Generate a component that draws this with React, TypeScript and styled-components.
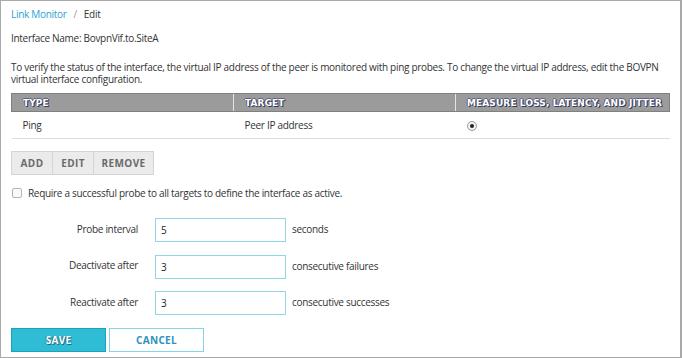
import React from "react";
import styled, { createGlobalStyle } from "styled-components";

const Global = createGlobalStyle`
  html, body { margin: 0; padding: 0; background: #fff; }
  body { font-family: "Open Sans", "Noto Sans", sans-serif; color: #333; }
  * { box-sizing: border-box; }
`;

const Frame = styled.div`
  width: 682px;
  height: 358px;
  border: 1px solid #a9a9a9;
  border-right-width: 2px;
  padding: 6px 11px 0 10px;
  font-size: 10px;
  letter-spacing: -0.3px;
  overflow: hidden;
`;

const Breadcrumb = styled.div`
  display: flex;
  gap: 7px;
  line-height: 14px;
  height: 14px;
`;

const Crumb = styled.span<{ $link?: boolean; $sep?: boolean }>`
  color: ${(p) => (p.$link ? "#2b9fd1" : p.$sep ? "#999" : "#333")};
`;

const Line = styled.div<{ $mt: number }>`
  margin-top: ${(p) => p.$mt}px;
  line-height: 14px;
`;

const Para = styled.p`
  margin: 16px 0 0;
  line-height: 12px;
  width: 665px;
`;

const Table = styled.table`
  margin-top: 8px;
  width: 659px;
  border-collapse: collapse;
  table-layout: fixed;
`;

const Th = styled.th<{ $w?: number }>`
  ${(p) => (p.$w ? `width: ${p.$w}px;` : "")}
  height: 18px;
  padding: 0 0 0 11px;
  background: #9b9b9b;
  border-top: 1px solid #808080;
  border-bottom: 1px solid #808080;
  border-left: 1px solid #e4e4e4;
  text-align: left;
  font-family: "DejaVu Sans", Verdana, sans-serif;
  font-weight: bold;
  font-size: 9px;
  letter-spacing: 0.1px;
  color: #fff;
  text-shadow: 1px 1px 0 #363b5a, -1px 0 0 #5d6283, 0 -1px 0 #5d6283, 1px 0 0 #4a4f70;
  &:first-child { border-left: 1px solid #808080; }
  &:last-child { border-right: 1px solid #808080; }
`;

const Td = styled.td`
  height: 27px;
  padding: 0 0 0 11px;
  border-bottom: 1px solid #dcdcdc;
  vertical-align: middle;
`;

const Radio = styled.span`
  display: inline-block;
  width: 10px;
  height: 10px;
  border: 1px solid #9a9a9a;
  border-radius: 50%;
  background: #f4f4f4;
  position: relative;
  vertical-align: middle;
  &::after {
    content: "";
    position: absolute;
    left: 2px;
    top: 2px;
    width: 4px;
    height: 4px;
    border-radius: 50%;
    background: #222;
  }
`;

const BtnGroup = styled.div`
  margin-top: 12px;
  display: flex;
`;

const GroupBtn = styled.button<{ $w: number }>`
  width: ${(p) => p.$w}px;
  height: 24px;
  background: #ebebeb;
  border: 1px solid #d5d5d5;
  margin-left: -1px;
  &:first-child { margin-left: 0; }
  font-family: "Open Sans", sans-serif;
  font-weight: 700;
  font-size: 10px;
  letter-spacing: 0.4px;
  color: #6a6a6a;
  padding: 0;
`;

const CheckRow = styled.label`
  margin-top: 11px;
  display: flex;
  align-items: center;
  gap: 6px;
  height: 14px;
  padding-left: 1px;
`;

const Check = styled.span`
  width: 10px;
  height: 10px;
  border: 1px solid #b5b5b5;
  border-radius: 2px;
  background: #fafafa;
`;

const Form = styled.div`
  margin-top: 18px;
  display: grid;
  grid-template-columns: 127px 131px auto;
  column-gap: 17px;
  row-gap: 12.5px;
  align-items: center;
`;

const Label = styled.div`
  text-align: right;
  margin-top: -3px;
`;

const Input = styled.div`
  height: 24px;
  border: 1px solid #8fd6e6;
  padding: 0 0 0 5px;
  display: flex;
  align-items: center;
  font-size: 10px;
  color: #222;
`;

const Unit = styled.div`
  margin-left: -11px;
  margin-top: -2px;
`;

const Actions = styled.div`
  margin-top: 13px;
  display: flex;
  gap: 3px;
`;

const ActionBtn = styled.button<{ $primary?: boolean }>`
  width: 95px;
  height: 24px;
  padding: 0;
  font-family: "Open Sans", sans-serif;
  font-weight: 700;
  font-size: 10px;
  letter-spacing: 0.3px;
  background: ${(p) => (p.$primary ? "#2fbcd5" : "#fff")};
  border: 1px solid ${(p) => (p.$primary ? "#1ea2ba" : "#86d5e5")};
  color: ${(p) => (p.$primary ? "#fff" : "#2b94ba")};
  text-shadow: ${(p) => (p.$primary ? "1px 1px 0 #1a6f85, -1px 0 0 #2a8aa0" : "none")};
`;

export default function App() {
  return (
    <>
      <Global />
      <Frame>
        <Breadcrumb>
          <Crumb $link>Link Monitor</Crumb>
          <Crumb $sep>/</Crumb>
          <Crumb>Edit</Crumb>
        </Breadcrumb>
        <Line $mt={10}>Interface Name: BovpnVif.to.SiteA</Line>
        <Para>
          To verify the status of the interface, the virtual IP address of the peer is monitored with ping probes. To change the virtual IP address, edit the BOVPN
          virtual interface configuration.
        </Para>
        <Table>
          <thead>
            <tr>
              <Th $w={222}>TYPE</Th>
              <Th $w={222}>TARGET</Th>
              <Th>MEASURE LOSS, LATENCY, AND JITTER</Th>
            </tr>
          </thead>
          <tbody>
            <tr>
              <Td>Ping</Td>
              <Td>Peer IP address</Td>
              <Td>
                <Radio />
              </Td>
            </tr>
          </tbody>
        </Table>
        <BtnGroup>
          <GroupBtn $w={42}>ADD</GroupBtn>
          <GroupBtn $w={42}>EDIT</GroupBtn>
          <GroupBtn $w={61}>REMOVE</GroupBtn>
        </BtnGroup>
        <CheckRow>
          <Check />
          <span>Require a successful probe to all targets to define the interface as active.</span>
        </CheckRow>
        <Form>
          <Label>Probe interval</Label>
          <Input>5</Input>
          <Unit>seconds</Unit>
          <Label>Deactivate after</Label>
          <Input>3</Input>
          <Unit>consecutive failures</Unit>
          <Label>Reactivate after</Label>
          <Input>3</Input>
          <Unit>consecutive successes</Unit>
        </Form>
        <Actions>
          <ActionBtn $primary>SAVE</ActionBtn>
          <ActionBtn>CANCEL</ActionBtn>
        </Actions>
      </Frame>
    </>
  );
}
